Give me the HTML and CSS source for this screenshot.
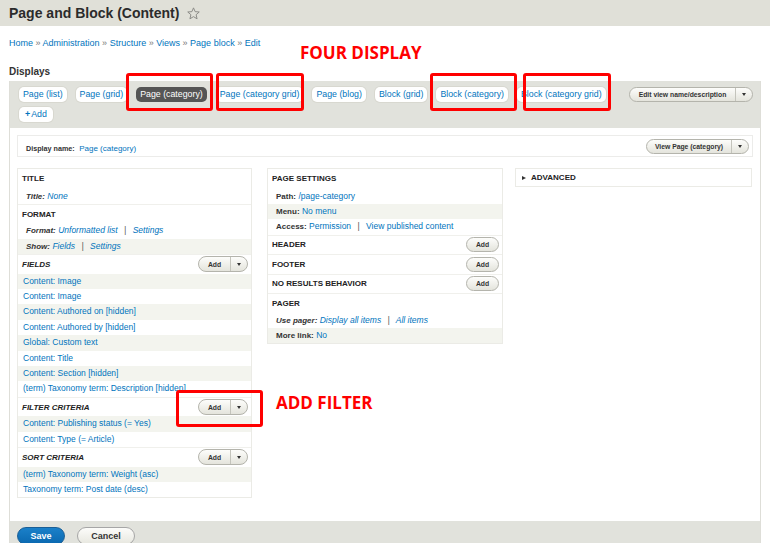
FILE: index.html
```html
<!DOCTYPE html>
<html lang="en">
<head>
<meta charset="utf-8">
<title>Page and Block (Content)</title>
<link rel="stylesheet" href="styles.css">
</head>
<body>
<div class="page">
  <header class="page-head">
    <h1 class="page-title">Page and Block (Content)</h1>
    <svg class="star" viewBox="0 0 12 12"><polygon points="6,0.8 7.5,4.3 11.3,4.6 8.4,7.1 9.3,10.9 6,8.9 2.7,10.9 3.6,7.1 0.7,4.6 4.5,4.3"/></svg>
  </header>

  <nav class="crumbs">
    <a href="#">Home</a> <span class="sep">»</span> <a href="#">Administration</a> <span class="sep">»</span> <a href="#">Structure</a> <span class="sep">»</span> <a href="#">Views</a> <span class="sep">»</span> <a href="#">Page block</a> <span class="sep">»</span> <a href="#">Edit</a>
  </nav>

  <h2 class="displays-label">Displays</h2>

  <section class="panel">
    <div class="tabs-band">
      <div class="tabs-row">
        <a class="tab" href="#">Page (list)</a>
        <a class="tab" href="#">Page (grid)</a>
        <a class="tab is-active" href="#">Page (category)</a>
        <a class="tab" href="#">Page (category grid)</a>
        <a class="tab" href="#">Page (blog)</a>
        <a class="tab" href="#">Block (grid)</a>
        <a class="tab" href="#">Block (category)</a>
        <a class="tab" href="#">Block (category grid)</a>
        <div class="dropbutton dropbutton-edit">
          <span class="db-main">Edit view name/description</span>
          <span class="db-toggle"><span class="caret"></span></span>
        </div>
      </div>
      <div class="tabs-row">
        <a class="tab tab-add" href="#"><span class="plus">+</span>Add</a>
      </div>
    </div>

    <div class="display-body">
      <div class="display-name">
        <div><span class="dn-label">Display name:</span> <a href="#" class="dn-value">Page (category)</a></div>
        <div class="dropbutton dropbutton-view">
          <span class="db-main">View Page (category)</span>
          <span class="db-toggle"><span class="caret"></span></span>
        </div>
      </div>

      <div class="columns">
        <div class="col col-left">
          <div class="box">
            <div class="head">TITLE</div>
            <div class="row opt ital"><span class="label">Title:</span> <a href="#">None</a></div>
            <div class="head">FORMAT</div>
            <div class="row opt ital"><span class="label">Format:</span> <a href="#">Unformatted list</a> <span class="bar">|</span> <a href="#">Settings</a></div>
            <div class="row opt ital alt"><span class="label">Show:</span> <a href="#">Fields</a> <span class="bar">|</span> <a href="#">Settings</a></div>
            <div class="head"><em>FIELDS</em>
              <div class="dropbutton dropbutton-add"><span class="db-main">Add</span><span class="db-toggle"><span class="caret"></span></span></div>
            </div>
            <div class="row alt"><a href="#">Content: Image</a></div>
            <div class="row"><a href="#">Content: Image</a></div>
            <div class="row alt"><a href="#">Content: Authored on [hidden]</a></div>
            <div class="row"><a href="#">Content: Authored by [hidden]</a></div>
            <div class="row alt"><a href="#">Global: Custom text</a></div>
            <div class="row"><a href="#">Content: Title</a></div>
            <div class="row alt"><a href="#">Content: Section [hidden]</a></div>
            <div class="row"><a href="#">(term) Taxonomy term: Description [hidden]</a></div>
            <div class="head"><em>FILTER CRITERIA</em>
              <div class="dropbutton dropbutton-add"><span class="db-main">Add</span><span class="db-toggle"><span class="caret"></span></span></div>
            </div>
            <div class="row alt"><a href="#">Content: Publishing status (= Yes)</a></div>
            <div class="row"><a href="#">Content: Type (= Article)</a></div>
            <div class="head"><em>SORT CRITERIA</em>
              <div class="dropbutton dropbutton-add"><span class="db-main">Add</span><span class="db-toggle"><span class="caret"></span></span></div>
            </div>
            <div class="row alt"><a href="#">(term) Taxonomy term: Weight (asc)</a></div>
            <div class="row"><a href="#">Taxonomy term: Post date (desc)</a></div>
          </div>
        </div>

        <div class="col col-mid">
          <div class="box">
            <div class="head">PAGE SETTINGS</div>
            <div class="row opt"><span class="label">Path:</span> <a href="#">/page-category</a></div>
            <div class="row opt alt"><span class="label">Menu:</span> <a href="#">No menu</a></div>
            <div class="row opt"><span class="label">Access:</span> <a href="#">Permission</a> <span class="bar">|</span> <a href="#">View published content</a></div>
            <div class="head">HEADER <button class="btn-add">Add</button></div>
            <div class="head">FOOTER <button class="btn-add">Add</button></div>
            <div class="head">NO RESULTS BEHAVIOR <button class="btn-add">Add</button></div>
            <div class="head">PAGER</div>
            <div class="row opt ital"><span class="label">Use pager:</span> <a href="#">Display all items</a> <span class="bar">|</span> <a href="#">All items</a></div>
            <div class="row opt alt"><span class="label">More link:</span> <a href="#">No</a></div>
          </div>
        </div>

        <div class="col col-right">
          <div class="box box-adv"><span class="tri"></span>ADVANCED</div>
        </div>
      </div>
    </div>

    <div class="actions">
      <button class="btn btn-primary">Save</button>
      <button class="btn btn-cancel">Cancel</button>
    </div>
  </section>

  <div class="note note-four">FOUR DISPLAY</div>
  <div class="note note-filter">ADD FILTER</div>
  <div class="callout callout-1"></div>
  <div class="callout callout-2"></div>
  <div class="callout callout-3"></div>
  <div class="callout callout-4"></div>
  <div class="callout callout-5"></div>
</div>
</body>
</html>
```
FILE: styles.css
```css
html, body { margin: 0; padding: 0; overflow: hidden; }
body { font-family: "Liberation Sans", Arial, sans-serif; color: #333; background: #fff; }
a { color: #0074bd; text-decoration: none; }
button { font-family: inherit; cursor: pointer; }

.page { position: relative; width: 770px; height: 543px; overflow: hidden; }

.page-head { height: 26px; background: #e0e0d8; display: flex; align-items: center; padding-left: 9px; gap: 8px; }
.page-title { margin: 0; font-size: 14px; font-weight: bold; color: #2b2b2b; line-height: 26px; }
.star { width: 13px; height: 13px; }
.star polygon { fill: none; stroke: #8a8a86; stroke-width: 0.9; stroke-linejoin: round; }

.crumbs { margin: 11px 9px 0; height: 12px; font-size: 9px; line-height: 12px; color: #777; overflow: hidden; }

.displays-label { margin: 16px 9px 0; height: 13px; font-size: 10px; line-height: 13px; font-weight: bold; color: #333; }

.panel { margin: 3px 9px 0; border-left: 1px solid #deded8; border-right: 1px solid #deded8; }

.tabs-band { background: #e1e2dc; padding: 6px 7px 6px 9px; }
.tabs-row { display: flex; align-items: center; gap: 9px; height: 15px; }
.tabs-row + .tabs-row { margin-top: 5px; }
.tab { display: block; height: 15px; line-height: 15px; padding: 0 4px; background: #fff; border-radius: 5px; font-size: 8.8px; color: #0074bd; white-space: nowrap; box-shadow: 0 0 0 1px #d8d8d0; }
.tab.is-active { background: #555; color: #fff; box-shadow: none; }
.tab-add { padding: 0 6px; }
.tab-add .plus { font-weight: bold; margin-right: 1px; }

.dropbutton { display: flex; align-items: stretch; height: 15px; box-sizing: border-box; border: 1px solid #b4b4ac; border-radius: 8px; background: linear-gradient(#fdfdfb, #e4e4dc); overflow: hidden; }
.dropbutton .db-main { display: flex; align-items: center; font-size: 6.8px; font-weight: bold; color: #333; white-space: nowrap; }
.dropbutton .db-toggle { width: 16px; border-left: 1px solid #c4c4bc; display: flex; align-items: center; justify-content: center; }
.caret { width: 0; height: 0; border-left: 2.5px solid transparent; border-right: 2.5px solid transparent; border-top: 3px solid #333; }

.dropbutton-edit { margin-left: auto; width: 124px; }
.dropbutton-edit .db-main { flex: 1; justify-content: center; }
.dropbutton-view { width: 103px; height: 15px; }
.dropbutton-view .db-main { flex: 1; justify-content: center; }
.dropbutton-add { width: 50px; height: 16px; }
.dropbutton-add .db-main { flex: 1; justify-content: center; }

.display-body { padding: 7px 7px 23px; }
.display-name { height: 22px; box-sizing: border-box; border: 1px solid #ececea; display: flex; align-items: center; justify-content: space-between; padding: 0 3px 0 8px; }
.dn-label { font-size: 7.2px; font-weight: bold; color: #333; }
.dn-value { font-size: 8px; }

.columns { display: flex; align-items: flex-start; margin-top: 11px; }
.col-left { width: 235px; }
.col-mid { width: 236px; margin-left: 15px; }
.col-right { width: 237px; margin-left: 12px; }

.box { border: 1px solid #ebebe6; background: #fff; }
.head { height: 19.5px; box-sizing: border-box; display: flex; align-items: center; justify-content: space-between; padding: 0 3px 0 4px; font-size: 8px; font-weight: bold; color: #222; }
.row + .head { border-top: 1px solid #f0f0ec; }
.head + .head { border-top: 1px solid #f0f0ec; }
.head em { font-style: italic; }
.row { height: 15.4px; line-height: 15.4px; padding-left: 5px; font-size: 8.5px; white-space: nowrap; overflow: hidden; }
.row.alt { background: #f3f4ee; }
.row.opt { padding-left: 8px; }
.row.ital { font-style: italic; }
.label { font-weight: bold; font-size: 8px; color: #333; }
.bar { color: #555; margin: 0 4px; }

.btn-add { width: 33px; height: 15px; padding: 0; box-sizing: border-box; border: 1px solid #b4b4ac; border-radius: 8px; background: linear-gradient(#fdfdfb, #e4e4dc); font-size: 6.8px; font-weight: bold; color: #333; }

.box-adv { height: 19px; box-sizing: border-box; display: flex; align-items: center; padding-left: 6px; font-size: 8px; font-weight: bold; color: #222; }
.tri { width: 0; height: 0; border-top: 2.5px solid transparent; border-bottom: 2.5px solid transparent; border-left: 4px solid #333; margin-right: 5px; }

.actions { background: #e1e2dc; height: 40px; padding: 6px 7px; display: flex; align-items: flex-start; gap: 12px; }
.btn { height: 18px; line-height: 16px; border-radius: 10px; font-size: 9px; font-weight: bold; padding: 0; box-sizing: border-box; }
.btn-primary { width: 48px; background: linear-gradient(#1b80c9, #0a68b0); color: #fff; border: 1px solid #1b5f96; }
.btn-cancel { width: 58px; background: linear-gradient(#fcfcfa, #e7e7df); color: #333; border: 1px solid #a6a6a6; }

.note { position: absolute; color: #f00; font-family: "Open Sans", "Liberation Sans", sans-serif; font-weight: 700; font-size: 17px; line-height: 1; white-space: nowrap; }
.note-four { left: 300px; top: 44px; }
.note-filter { left: 276px; top: 394px; }

.callout { position: absolute; box-sizing: border-box; border: 3px solid #f00; border-radius: 3px; }
.callout-1 { left: 126px; top: 73px; width: 87px; height: 38px; }
.callout-2 { left: 216px; top: 73px; width: 88px; height: 38px; }
.callout-3 { left: 430px; top: 73px; width: 87px; height: 38px; }
.callout-4 { left: 523px; top: 73px; width: 88px; height: 38px; }
.callout-5 { left: 176px; top: 390px; width: 87px; height: 37px; }
```
